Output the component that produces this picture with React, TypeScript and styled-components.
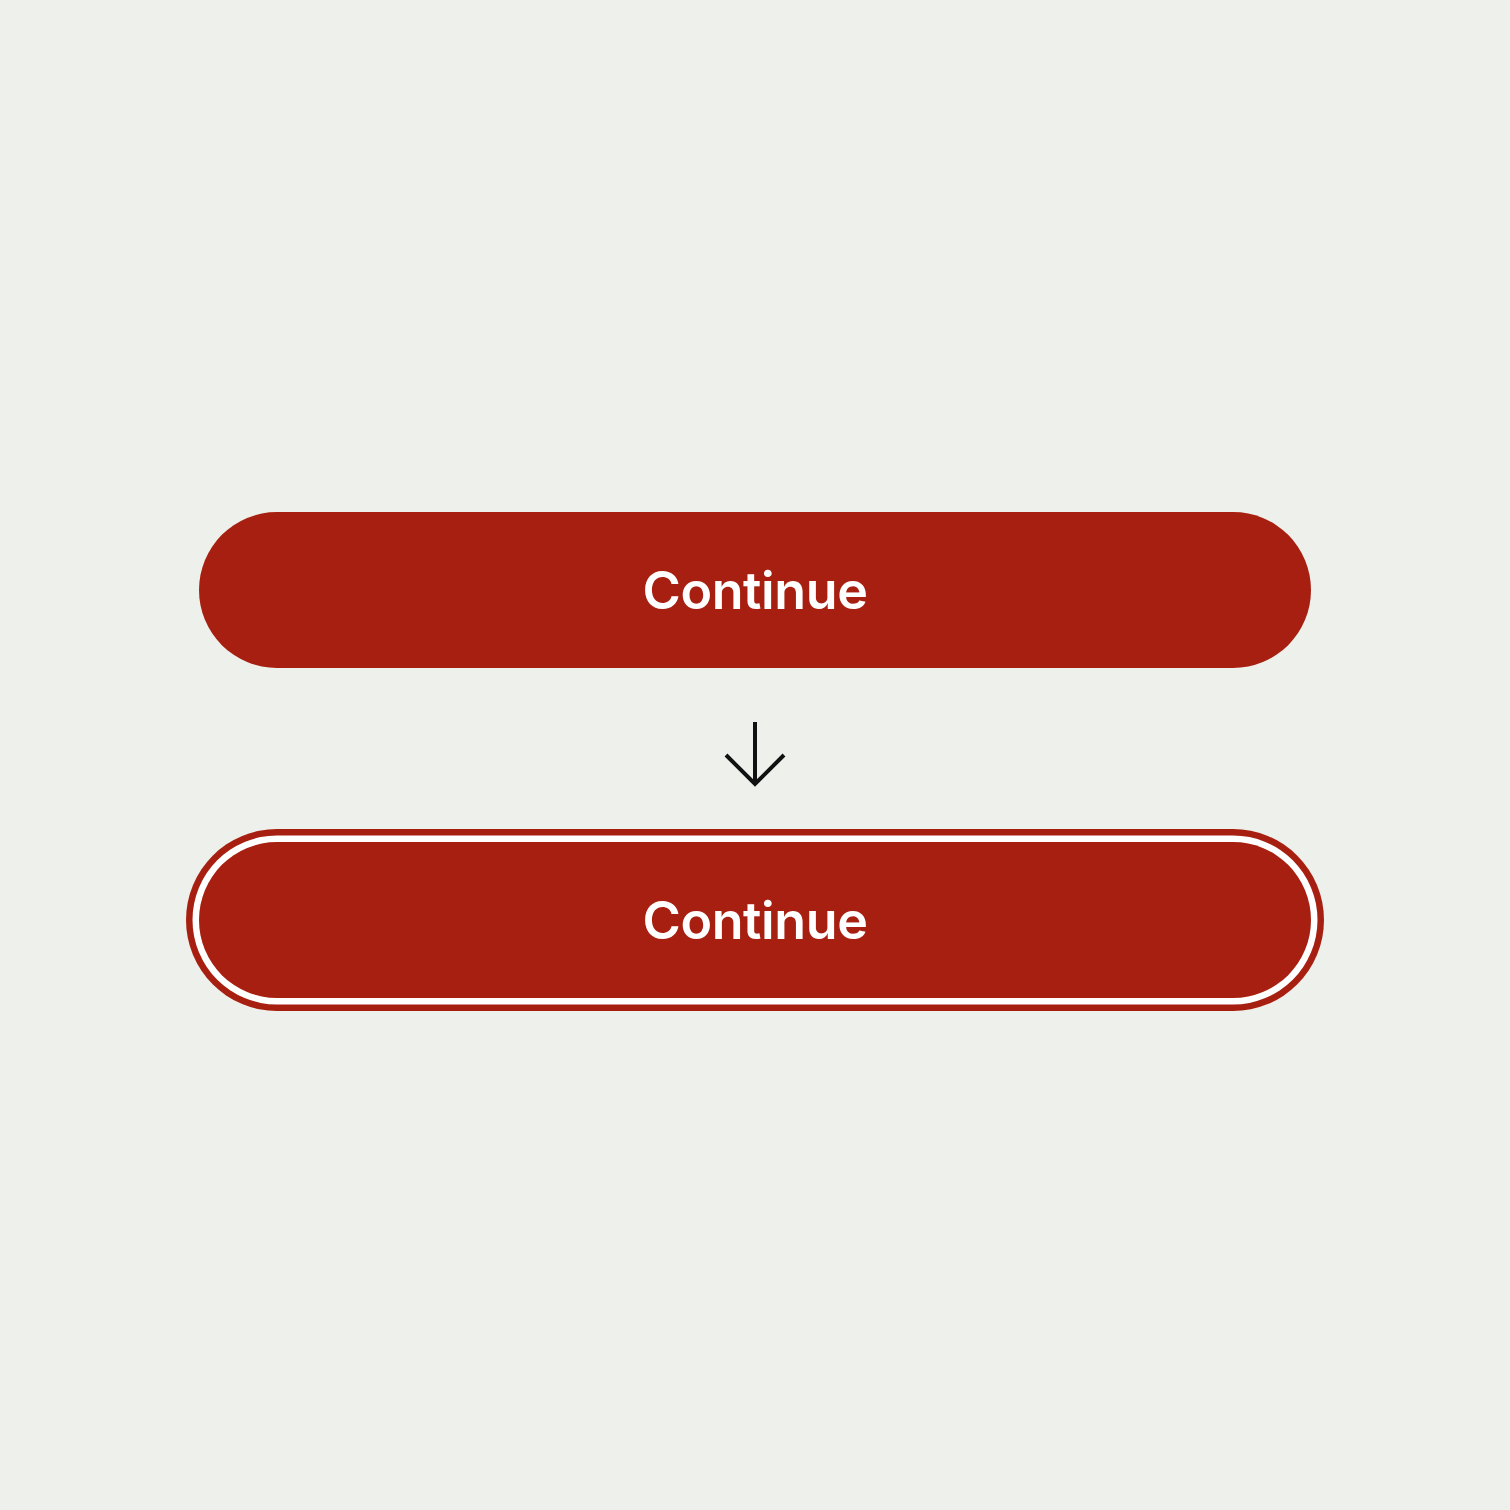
import styled, { createGlobalStyle } from "styled-components";

const GlobalStyle = createGlobalStyle`
  html, body {
    margin: 0;
    padding: 0;
    background: #eef0eb;
  }
`;

const Page = styled.div`
  width: 1510px;
  height: 1510px;
  display: flex;
  flex-direction: column;
  align-items: center;
  justify-content: center;
  font-family: Inter, "Noto Sans", sans-serif;
`;

const Button = styled.button<{ $focused?: boolean }>`
  width: 1112px;
  height: 156px;
  border: none;
  border-radius: 78px;
  background: #a71f10;
  color: #ffffff;
  font-family: inherit;
  font-size: 52px;
  font-weight: 600;
  letter-spacing: -0.4px;
  cursor: pointer;
  box-shadow: ${(p) =>
    p.$focused ? "0 0 0 6.5px #ffffff, 0 0 0 13px #a71f10" : "none"};
`;

const ArrowWrap = styled.div`
  height: 174px;
  display: flex;
  align-items: center;
  justify-content: center;
`;

const ArrowDown = () => (
  <svg width="64" height="70" viewBox="0 0 64 70" fill="none">
    <path
      d="M32 2 V64 M3 35 L32 64 L61 35"
      stroke="#111111"
      strokeWidth="4"
      strokeLinecap="butt"
      strokeLinejoin="miter"
    />
  </svg>
);

export default function App() {
  return (
    <>
      <GlobalStyle />
      <Page>
        <Button>Continue</Button>
        <ArrowWrap>
          <ArrowDown />
        </ArrowWrap>
        <Button $focused>Continue</Button>
      </Page>
    </>
  );
}
